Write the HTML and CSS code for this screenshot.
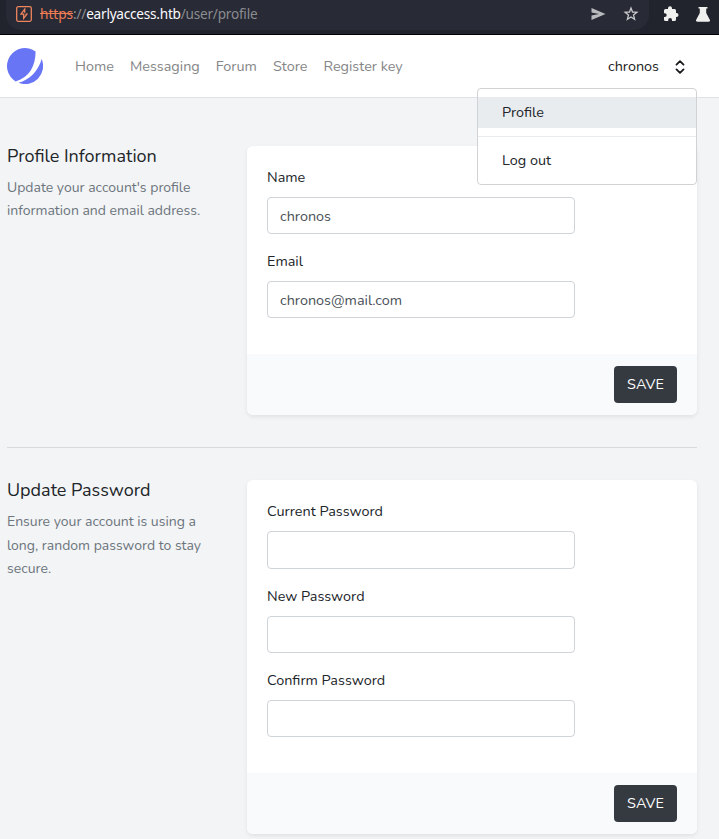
FILE: index.html
```
<!DOCTYPE html>
<html lang="en">
<head>
<meta charset="utf-8">
<title>Profile</title>
<link rel="stylesheet" href="styles.css">
</head>
<body>
<header class="browser">
  <div class="address">
    <svg class="burp" width="16" height="16" viewBox="0 0 16 16" fill="none" stroke="#ee855f" stroke-width="1.300"><rect x=".7" y=".7" width="14.6" height="14.6" rx="1.500"/><path d="M8.700 6.700V3.200L5 8.100h2.700v4.300l3.200-4.200H9.500"/></svg>
    <span class="url"><s>https</s>://<b>earlyaccess.htb</b>/user/profile</span>
    <svg class="send" width="15" height="14" viewBox="0 0 15 14" fill="#b9babd"><path d="M.5 1 14.5 7 .5 13V8.400L8 7 .5 5.600z"/></svg>
    <svg class="star" width="16" height="16" viewBox="0 0 16 16" fill="none" stroke="#c7c8cb" stroke-width="1.300" stroke-linejoin="miter"><path d="m8 2 1.500 4 4.400.2-3.400 2.800 1.100 4.200L8 10.900l-3.600 2.300L5.500 9 2.100 6.200 6.500 6z"/></svg>
  </div>
  <svg class="puzzle" width="16" height="16" viewBox="0 0 16 16" fill="#f0f0ee"><path d="M2.5 3H5V2.200a2 2 0 0 1 4 0V3h2.500a1.500 1.500 0 0 1 1.500 1.500V7h.5a2 2 0 0 1 0 4H13v2.500a1.500 1.500 0 0 1-1.500 1.500H9v-1a1.900 1.900 0 0 0-3.800 0v1H2.500A1.500 1.500 0 0 1 1 13.500V11h.8a1.900 1.900 0 0 0 0-3.800H1V4.500A1.500 1.500 0 0 1 2.500 3z"/></svg>
  <svg class="flask" width="14" height="15" viewBox="0 0 14 15" fill="#f0f0ee"><path d="M2.500 0h9v1.500h-1.300V6l3.600 6.700c.6 1.200 0 2.100-1.300 2.100h-11C.2 14.800-.4 13.900.2 12.700L3.800 6V1.500H2.500z"/></svg>
</header>
<nav class="nav">
  <svg class="logo" width="36" height="36" viewBox="0 0 36 36" fill="#6875f5"><path d="M8.600 33.400A18 18 0 1 1 28.600 3.500C28.500 18 22.500 29.500 8.600 33.400z"/><path d="M11.500 34.800C22.500 32 31 23.500 34.700 11.100A18 18 0 0 1 11.500 34.800z"/></svg>
  <a class="home">Home</a><a>Messaging</a><a>Forum</a><a>Store</a><a>Register key</a>
  <div class="user"><span>chronos</span>
    <svg width="10" height="14" viewBox="0 0 10 14" fill="none" stroke="#17191c" stroke-width="1.800" stroke-linecap="round" stroke-linejoin="round"><path d="m1.500 4.600 3.500-3.500 3.500 3.500M1.500 9.400 5 12.900l3.500-3.500"/></svg>
    <div class="menu"><a class="active">Profile</a><hr><a>Log out</a></div>
  </div>
</nav>
<main>
  <section class="row">
    <div><h3>Profile Information</h3><p>Update your account's profile<br>information and email address.</p></div>
    <form class="card">
      <div class="fields">
        <label>Name</label><div class="input">chronos</div>
        <label>Email</label><div class="input">chronos@mail.com</div>
      </div>
      <div class="actions"><button type="button">SAVE</button></div>
    </form>
  </section>
  <hr class="divider">
  <section class="row">
    <div><h3>Update Password</h3><p>Ensure your account is using a<br>long, random password to stay<br>secure.</p></div>
    <form class="card">
      <div class="fields">
        <label>Current Password</label><div class="input"></div>
        <label>New Password</label><div class="input"></div>
        <label>Confirm Password</label><div class="input"></div>
      </div>
      <div class="actions"><button type="button">SAVE</button></div>
    </form>
  </section>
</main>
</body>
</html>
```
FILE: styles.css
```
* { box-sizing: border-box; }
body { margin: 0; height: 839px; overflow: hidden; background: #f3f4f6; color: #212529; font: 14.4px/23.04px Nunito, Lato, sans-serif; }
.browser { height: 35px; background: #22242d; border-bottom: 1px solid #000; display: flex; align-items: flex-start; }
.address { width: 643px; height: 30px; margin-left: 6px; background: #282a35; border-radius: 0 0 15px 15px; display: flex; align-items: center; padding: 0 10px; }
.burp, .send, .star { position: relative; top: -1px; }
.url { font: 13.6px/20px "Noto Sans", sans-serif; letter-spacing: -.23px; color: #8b8c91; margin-left: 8px; flex: 1; white-space: nowrap; position: relative; top: -1px; }
.url s { color: #ee7c55; letter-spacing: 0; }
.url b { font-weight: 400; color: #fbfbfe; }
.star { margin-left: 17px; margin-right: 0; }
.puzzle { margin: 6px 0 0 14px; }
.flask { margin: 7px 0 0 17px; }
.nav { height: 62.6px; background: #fff; border-bottom: 1px solid #dee2e6; display: flex; align-items: center; padding-left: 7px; color: #858687; position: relative; white-space: nowrap; }
.nav > a { margin-right: 16px; padding-top: 2px; }
.nav > .home { margin-left: 32px; }
.user { margin-left: auto; margin-right: 34px; display: flex; align-items: center; gap: 16px; color: #1b1c1d; }
.user > span { padding-top: 2px; }
.user > svg { margin-top: 2px; }
.menu { position: absolute; left: 477px; top: 53px; width: 220px; height: 97px; padding: 8px 0; background: #fff; border: 1px solid #d1d2d4; border-radius: 4px; color: #212529; }
.menu a { display: block; height: 31px; line-height: 30px; padding-left: 24px; }
.menu .active { background: #e9ecef; }
.menu hr { border: 0; border-top: 1px solid #e9ecef; margin: 8px 0; }
main { padding: 48px 22px 0 7px; }
.row { display: grid; grid-template-columns: 240px 450px; }
h3 { margin: 0 0 9px; font-size: 18px; line-height: 21px; font-weight: 400; white-space: nowrap; }
p { margin: 0; font-size: 14px; color: #6c757d; line-height: 23.4px; white-space: nowrap; }
.card { background: #fff; border-radius: 6px; box-shadow: 0 2px 4px rgba(0,0,0,.075); overflow: hidden; }
.fields { padding: 20px; }
label { display: block; margin-bottom: 8px; }
.input { width: 308px; height: 37.3px; margin-bottom: 16px; border: 1px solid #ced4da; border-radius: 4px; padding: 7px 12px; color: #495057; }
.actions { height: 61px; background: #f8fafc; padding: 12px 20px; display: flex; justify-content: flex-end; }
button { width: 63px; height: 37px; padding: 0; border: 0; border-radius: 4px; background: #343a40; color: #fff; font: inherit; }
.divider { border: 0; border-top: 1px solid #d8dadd; margin: 32px 0; }
```
